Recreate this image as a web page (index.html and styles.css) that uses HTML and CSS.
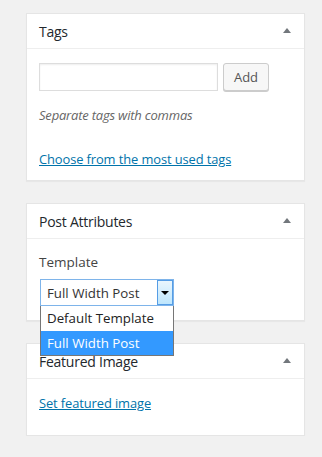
FILE: index.html
```html
<!DOCTYPE html>
<html>
<head>
<meta charset="utf-8">
<link rel="stylesheet" href="styles.css">
</head>
<body>
<div class="sidebar">
  <div class="postbox">
    <div class="hndle"><span class="title">Tags</span><span class="toggle"></span></div>
    <div class="inside tags-inside">
      <div class="tag-row">
        <input class="tag-input" type="text">
        <button class="btn">Add</button>
      </div>
      <p class="howto">Separate tags with commas</p>
      <a class="link choose" href="#">Choose from the most used tags</a>
    </div>
  </div>
  <div class="postbox">
    <div class="hndle"><span class="title">Post Attributes</span><span class="toggle"></span></div>
    <div class="inside attr-inside">
      <p class="label">Template</p>
      <div class="select-wrap">
        <div class="select">
          <span class="select-value">Full Width Post</span>
          <span class="select-btn"><span class="caret"></span></span>
        </div>
        <ul class="options">
          <li class="option">Default Template</li>
          <li class="option selected">Full Width Post</li>
        </ul>
      </div>
    </div>
  </div>
  <div class="postbox">
    <div class="hndle"><span class="title">Featured Image</span><span class="toggle"></span></div>
    <div class="inside feat-inside">
      <a class="link" href="#">Set featured image</a>
    </div>
  </div>
</div>
</body>
</html>
```
FILE: styles.css
```css
html, body {
  margin: 0;
  padding: 0;
  background: #f1f1f1;
}
body {
  font-family: "Open Sans", "Noto Sans", sans-serif;
  color: #444;
  font-size: 13px;
}
.sidebar {
  width: 279px;
  margin-left: 26px;
  padding-top: 13px;
  display: flex;
  flex-direction: column;
  gap: 22px;
}
.postbox {
  background: #fff;
  border: 1px solid #e5e5e5;
  box-shadow: 0 1px 1px rgba(0,0,0,0.04);
}
.hndle {
  height: 34px;
  border-bottom: 1px solid #eee;
  display: flex;
  align-items: center;
  justify-content: space-between;
  padding: 0 13px 0 12px;
}
.title {
  font-size: 14px;
  color: #23282d;
  letter-spacing: -0.25px;
}
.toggle {
  width: 0;
  height: 0;
  border-left: 4px solid transparent;
  border-right: 4px solid transparent;
  border-bottom: 5px solid #72777c;
  margin-top: -2px;
}
.inside {
  padding: 14px 12px 0;
}
.tags-inside {
  height: 117px;
}
.tag-row {
  display: flex;
  gap: 5px;
}
.tag-input {
  width: 179px;
  height: 28px;
  box-sizing: border-box;
  border: 1px solid #ddd;
  box-shadow: inset 0 1px 2px rgba(0,0,0,0.07);
  margin: 0;
  padding: 0;
  background: #fff;
}
.btn {
  width: 46px;
  height: 28px;
  box-sizing: border-box;
  border: 1px solid #ccc;
  border-radius: 3px;
  background: #f7f7f7;
  box-shadow: 0 1px 0 #ccc;
  font-family: "Open Sans", "Noto Sans", sans-serif;
  font-size: 13px;
  color: #555;
  padding: 0;
  margin: 0;
}
.howto {
  margin: 15px 0 0;
  font-style: italic;
  color: #666;
  font-size: 13px;
  letter-spacing: -0.2px;
}
.link {
  color: #0073aa;
  text-decoration: underline;
  font-size: 12.9px;
  letter-spacing: -0.1px;
}
.choose {
  display: block;
  margin-top: 26px;
}
.attr-inside {
  height: 67px;
  padding-top: 14px;
}
.label {
  margin: 0;
  font-size: 13.5px;
  color: #444;
  line-height: 18px;
}
.select-wrap {
  position: relative;
  margin-top: 8px;
  margin-left: 1px;
  width: 134px;
}
.select {
  height: 27px;
  box-sizing: border-box;
  border: 1px solid #7eb4ea;
  display: flex;
  align-items: center;
  justify-content: space-between;
  background: #fff;
}
.select-value {
  padding-left: 6px;
  font-size: 13.3px;
  color: #333;
}
.select-btn {
  width: 16px;
  height: 25px;
  box-sizing: border-box;
  border: 1px solid #569de5;
  background: linear-gradient(#eaf6fd, #bee6fd);
  display: flex;
  align-items: center;
  justify-content: center;
}
.caret {
  width: 0;
  height: 0;
  border-left: 4px solid transparent;
  border-right: 4px solid transparent;
  border-top: 4px solid #000;
}
.options {
  position: absolute;
  left: 0;
  top: 27px;
  width: 134px;
  box-sizing: border-box;
  margin: 0;
  padding: 0;
  list-style: none;
  background: #fff;
  border: 1px solid #767676;
  border-top: 0;
  z-index: 5;
}
.option {
  height: 24px;
  line-height: 24px;
  padding-left: 6px;
  font-size: 13.3px;
  color: #222;
}
.option:first-child {
  height: 25px;
  line-height: 25px;
}
.option.selected {
  background: #3399ff;
  color: #fff;
}
.feat-inside {
  height: 41px;
  padding-top: 15px;
}
```
